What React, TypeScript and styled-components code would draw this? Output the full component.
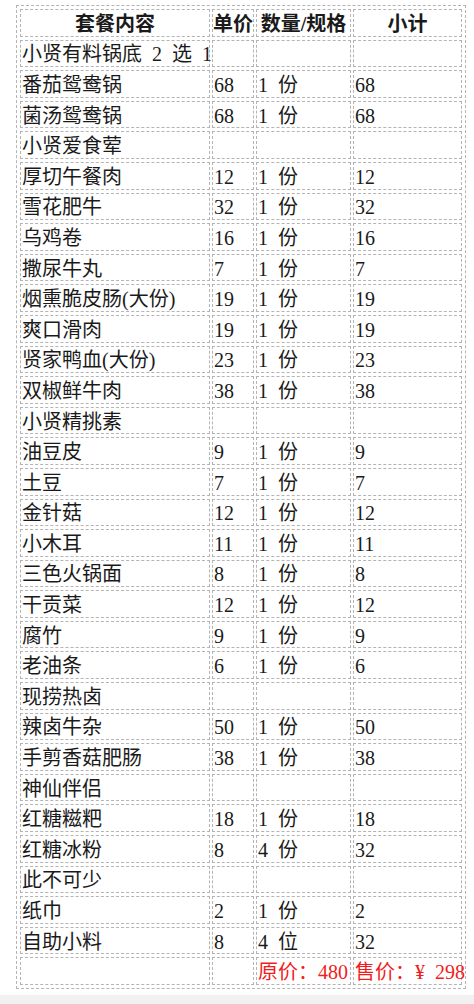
import React from 'react';
import styled, { createGlobalStyle } from 'styled-components';

const GlobalStyle = createGlobalStyle`
  html, body {
    margin: 0;
    padding: 0;
    background: #ffffff;
  }
  body {
    font-family: "Liberation Serif", "Noto Sans CJK SC", serif;
    color: #1a1a1a;
  }
`;

const Page = styled.div`
  padding: 5px 8px 0 16px;
`;

const Table = styled.table`
  width: 450px;
  table-layout: fixed;
  border-collapse: separate;
  border-spacing: 2px 3px;
  padding: 0 1px;
  border: 1px dashed #b4b4b4;
  box-sizing: border-box;
`;

const Col = styled.col<{ $w: number }>`
  width: ${({ $w }) => $w}px;
`;

const Head = styled.th`
  box-sizing: border-box;
  height: 27.6px;
  border: 1px dashed #b4b4b4;
  padding: 2px 0 0;
  font-size: 20px;
  line-height: 20px;
  font-weight: 700;
  text-align: center;
  white-space: nowrap;
  vertical-align: middle;
`;

const Cell = styled.td<{ $red?: boolean }>`
  box-sizing: border-box;
  height: 27.6px;
  border: 1px dashed #b4b4b4;
  padding: 2px 1px 0;
  font-size: 20px;
  line-height: 20px;
  word-spacing: 5px;
  white-space: nowrap;
  vertical-align: middle;
  color: ${({ $red }) => ($red ? '#f21c1c' : '#1a1a1a')};
`;

const Footer = styled.div`
  margin-top: 6px;
  height: 9px;
  background: #f1f1f1;
`;

type Item = [string, string?, string?, string?];

const rows: Item[] = [
  ['小贤有料锅底 2 选 1'],
  ['番茄鸳鸯锅', '68', '1 份', '68'],
  ['菌汤鸳鸯锅', '68', '1 份', '68'],
  ['小贤爱食荤'],
  ['厚切午餐肉', '12', '1 份', '12'],
  ['雪花肥牛', '32', '1 份', '32'],
  ['乌鸡卷', '16', '1 份', '16'],
  ['撒尿牛丸', '7', '1 份', '7'],
  ['烟熏脆皮肠(大份)', '19', '1 份', '19'],
  ['爽口滑肉', '19', '1 份', '19'],
  ['贤家鸭血(大份)', '23', '1 份', '23'],
  ['双椒鲜牛肉', '38', '1 份', '38'],
  ['小贤精挑素'],
  ['油豆皮', '9', '1 份', '9'],
  ['土豆', '7', '1 份', '7'],
  ['金针菇', '12', '1 份', '12'],
  ['小木耳', '11', '1 份', '11'],
  ['三色火锅面', '8', '1 份', '8'],
  ['干贡菜', '12', '1 份', '12'],
  ['腐竹', '9', '1 份', '9'],
  ['老油条', '6', '1 份', '6'],
  ['现捞热卤'],
  ['辣卤牛杂', '50', '1 份', '50'],
  ['手剪香菇肥肠', '38', '1 份', '38'],
  ['神仙伴侣'],
  ['红糖糍粑', '18', '1 份', '18'],
  ['红糖冰粉', '8', '4 份', '32'],
  ['此不可少'],
  ['纸巾', '2', '1 份', '2'],
  ['自助小料', '8', '4 位', '32'],
];

const App: React.FC = () => {
  return (
    <>
      <GlobalStyle />
      <Page>
        <Table>
          <colgroup>
            <Col $w={190} />
            <Col $w={42} />
            <Col $w={95} />
            <Col $w={109} />
          </colgroup>
          <thead>
            <tr>
              <Head>套餐内容</Head>
              <Head>单价</Head>
              <Head>数量/规格</Head>
              <Head>小计</Head>
            </tr>
          </thead>
          <tbody>
            {rows.map(([name, price, qty, sum], i) => (
              <tr key={i}>
                <Cell>{name}</Cell>
                <Cell>{price}</Cell>
                <Cell>{qty}</Cell>
                <Cell>{sum}</Cell>
              </tr>
            ))}
            <tr>
              <Cell />
              <Cell />
              <Cell $red>原价：480</Cell>
              <Cell $red>售价：¥ 298</Cell>
            </tr>
          </tbody>
        </Table>
      </Page>
      <Footer />
    </>
  );
};

export default App;
